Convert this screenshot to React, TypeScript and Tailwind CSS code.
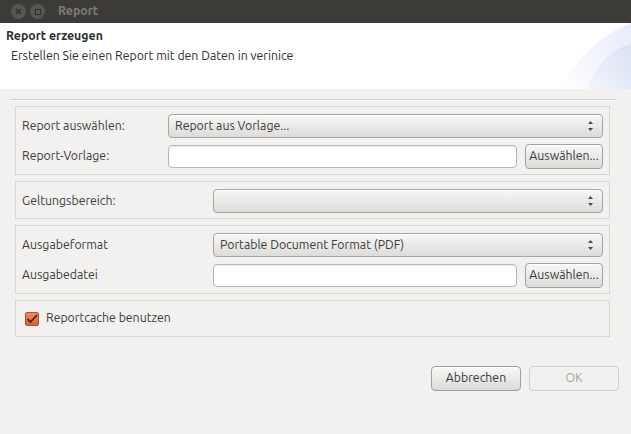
import React from "react";

const font = { fontFamily: "Ubuntu, 'Noto Sans', 'DejaVu Sans', sans-serif" };

function Arrows() {
  return (
    <svg width="7" height="12" viewBox="0 0 7 12" className="ml-auto">
      <path d="M3.5 1 L6 4 L1 4 Z" fill="#4c4c4c" />
      <path d="M3.5 11 L6 8 L1 8 Z" fill="#4c4c4c" />
    </svg>
  );
}

function Combo({ text }: { text?: string }) {
  return (
    <div className="flex h-[24px] flex-1 items-center rounded-[4px] border border-[#a7a5a1] bg-gradient-to-b from-[#f7f7f6] to-[#dddcda] pl-[6px] pr-[8px] text-[#3c3c3c] shadow-[inset_0_1px_0_#ffffff]">
      <span>{text}</span>
      <Arrows />
    </div>
  );
}

function Field() {
  return <div className="h-[23px] flex-1 rounded-[4px] border border-[#b9b7b3] bg-white shadow-[inset_0_1px_1px_rgba(0,0,0,0.08)]" />;
}

function Btn({ label, disabled, w }: { label: string; disabled?: boolean; w: string }) {
  return (
    <div
      className={
        (disabled
          ? "flex h-[25px] items-center justify-center rounded-[4px] border border-[#d2d0cc] bg-[#f2f1f0] text-[#a7a6a2] "
          : "flex h-[25px] items-center justify-center rounded-[4px] border border-[#a3a19d] bg-gradient-to-b from-[#f8f8f7] to-[#dcdbd9] text-[#3c3c3c] shadow-[inset_0_1px_0_#ffffff] ") + w
      }
    >
      {label}
    </div>
  );
}

export default function App() {
  return (
    <div className="flex h-[434px] w-[631px] flex-col overflow-hidden bg-[#f2f1f0] text-[12.3px] text-[#3c3c3c]" style={font}>
      {/* title bar */}
      <div className="flex h-[23px] items-center bg-[#3c3b37] pl-[11px]">
        <div className="flex h-[15px] w-[15px] items-center justify-center rounded-full bg-[#57564f]">
          <svg width="7" height="7" viewBox="0 0 7 7">
            <path d="M1 1 L6 6 M6 1 L1 6" stroke="#2e2d2a" strokeWidth="1.4" />
          </svg>
        </div>
        <div className="ml-[4px] flex h-[15px] w-[15px] items-center justify-center rounded-full bg-[#57564f]">
          <div className="h-[6px] w-[6px] border border-[#2e2d2a]" />
        </div>
        <span className="ml-[13px] font-bold text-[#7d7c77]">Report</span>
      </div>

      {/* header */}
      <div className="relative h-[66px] bg-white">
        <svg className="absolute right-0 top-0" width="76" height="66" viewBox="0 0 76 66">
          <defs>
            <linearGradient id="g1" x1="0" y1="1" x2="1" y2="0.3">
              <stop offset="0" stopColor="#ffffff" />
              <stop offset="1" stopColor="#eaeefa" />
            </linearGradient>
            <linearGradient id="g2" x1="0" y1="1" x2="1" y2="0.3">
              <stop offset="0" stopColor="#f3f5fc" />
              <stop offset="1" stopColor="#dde4f6" />
            </linearGradient>
          </defs>
          <path d="M4 66 C 20 38, 45 12, 76 0 L76 66 Z" fill="url(#g1)" />
          <path d="M32 66 C 40 45, 55 26, 76 21 L76 66 Z" fill="url(#g2)" />
        </svg>
        <div className="relative pl-[6px] pt-[4px] font-bold text-[#2e2e2e]">Report erzeugen</div>
        <div className="relative pl-[11px] pt-[2px] text-[#2e2e2e]">Erstellen Sie einen Report mit den Daten in verinice</div>
      </div>

      {/* body */}
      <div className="flex flex-1 flex-col pl-[15px] pr-[15px] pt-[10px]">
        <div className="-ml-[5px] mb-[5px] h-[2px] border-t border-[#d3d1cd] bg-[#fbfafa]" />
        <div className="mr-[6px] flex flex-col gap-[6px]">
          <div className="flex flex-col gap-[6px] border border-[#d9d7d3] px-[6px] pb-[5px] pt-[7px]">
            <div className="flex items-center">
              <span className="w-[146px]">Report auswählen:</span>
              <Combo text="Report aus Vorlage..." />
            </div>
            <div className="flex items-center">
              <span className="w-[146px]">Report-Vorlage:</span>
              <Field />
              <div className="ml-[8px]">
                <Btn label="Auswählen..." w="w-[78px]" />
              </div>
            </div>
          </div>
          <div className="flex items-center border border-[#d9d7d3] px-[6px] pb-[5px] pt-[7px]">
            <span className="w-[191px]">Geltungsbereich:</span>
            <Combo />
          </div>
          <div className="flex flex-col gap-[6px] border border-[#d9d7d3] px-[6px] pb-[5px] pt-[7px]">
            <div className="flex items-center">
              <span className="w-[191px]">Ausgabeformat</span>
              <Combo text="Portable Document Format (PDF)" />
            </div>
            <div className="flex items-center">
              <span className="w-[191px]">Ausgabedatei</span>
              <Field />
              <div className="ml-[8px]">
                <Btn label="Auswählen..." w="w-[78px]" />
              </div>
            </div>
          </div>
          <div className="flex h-[37px] items-center border border-[#d9d7d3] pl-[9px]">
            <div className="flex h-[14px] w-[14px] items-center justify-center rounded-[2px] border border-[#a9532f] bg-gradient-to-b from-[#f08a5d] to-[#dd5f2f]">
              <svg width="12" height="10" viewBox="0 0 12 10">
                <path d="M1.5 5 L4.5 8 L11 1" fill="none" stroke="#3a2a22" strokeWidth="1.8" />
              </svg>
            </div>
            <span className="ml-[7px]">Reportcache benutzen</span>
          </div>
        </div>
        <div className="-mr-[3px] mt-[29px] flex justify-end gap-[8px]">
          <Btn label="Abbrechen" w="w-[90px]" />
          <Btn label="OK" disabled w="w-[90px]" />
        </div>
      </div>
    </div>
  );
}
